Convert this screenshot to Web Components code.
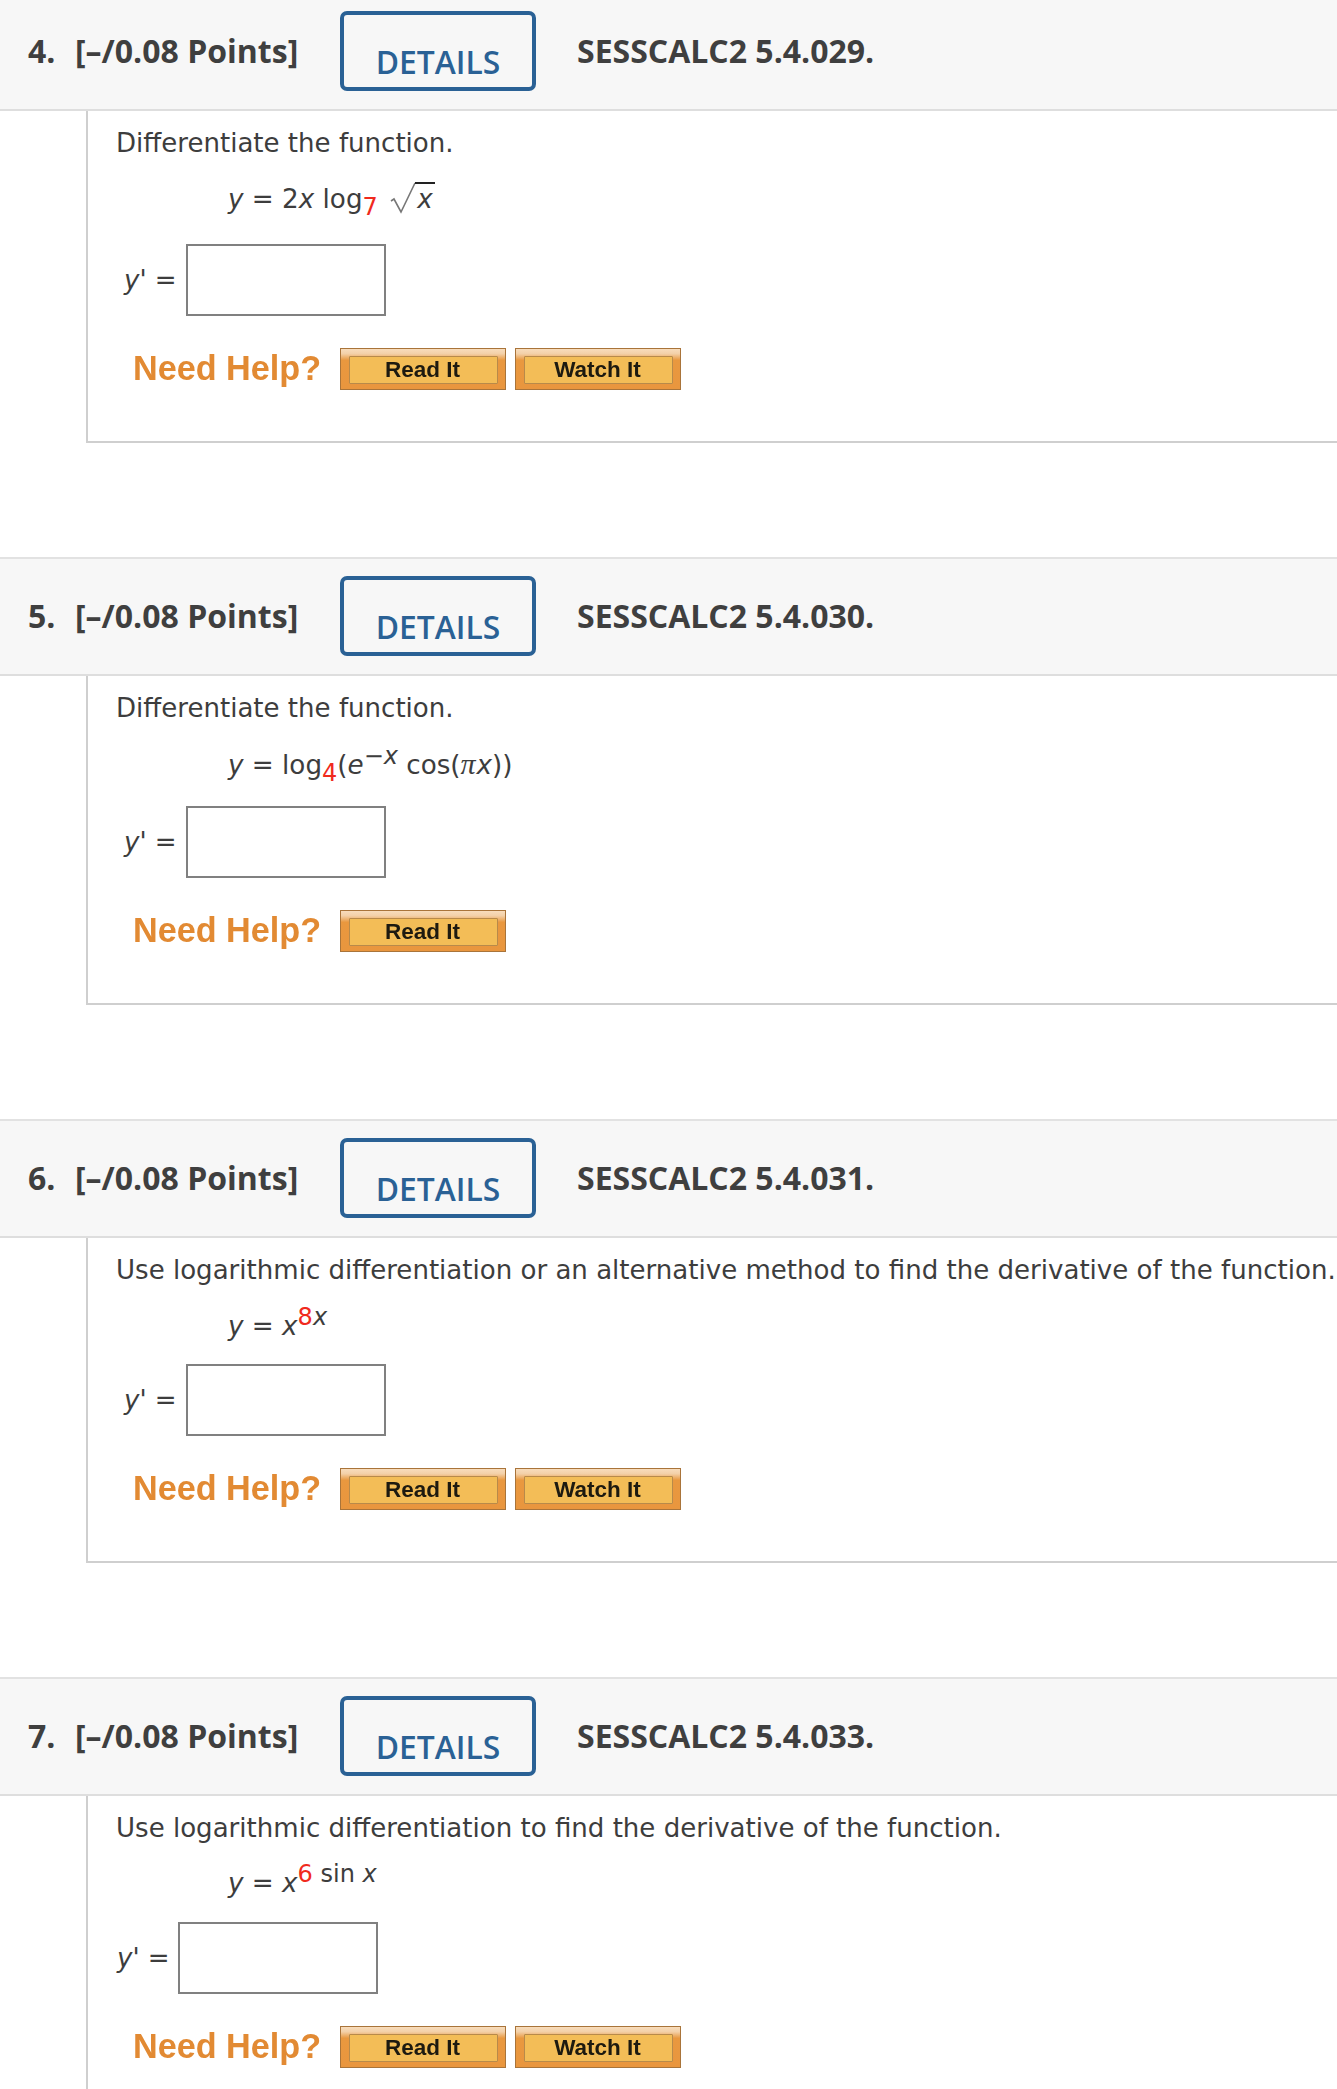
<!DOCTYPE html>
<html><head><meta charset="utf-8">
<style>
html{margin:0;padding:0;height:2089px;overflow:hidden;background:#fff}
body{margin:-8px 0 0;padding:0;font-family:"DejaVu Sans",sans-serif;color:#3d3d3d}
.r{color:#f02a1d}
i{font-style:italic}
</style></head><body>
<template id="t-q"><style>
:host{display:block;margin-bottom:114px}
header{height:115px;background:#f7f7f7;border-top:2px solid #e2e2e2;border-bottom:2px solid #dedede;display:flex;align-items:center;font-family:"Open Sans",sans-serif;font-weight:700;font-size:32px;color:#3f3f3f;white-space:nowrap}
.num{margin-left:28px;width:47px;margin-bottom:3px}
.pts{width:265px;margin-bottom:3px}
x-details{margin-right:41px;margin-top:-2px}
.code{margin-bottom:3px}
.body{margin-left:86px;border-left:2px solid #cfcfcf;border-bottom:2px solid #cfcfcf;padding:12px 0 0 28px;height:calc(var(--bh,332px) - 14px);font-size:26.05px;white-space:nowrap}
.prompt{height:40px;line-height:40px}
.formula{height:calc(var(--fh,134px) - 53px);padding-left:112px;line-height:1;display:flex;align-items:flex-start;padding-top:var(--ft,20px);box-sizing:border-box;font-size:26.2px}
.row{display:flex;align-items:center;padding-left:var(--ri,8px);height:72px}
.row .lab{width:var(--lw,62px);flex:none}
.help{margin-top:32px;display:flex;align-items:center;margin-left:18px;gap:9px}
</style>
<header><span class="num"><slot name="num"></slot></span><span class="pts">[–/0.08 Points]</span><x-details></x-details><span class="code"><slot name="code"></slot></span></header>
<div class="body">
<div class="prompt"><slot name="prompt"></slot></div>
<div class="formula"><slot name="formula"></slot></div>
<div class="row"><span class="lab"><i>y'</i> =</span><x-answer></x-answer></div>
<div class="help"><x-needhelp></x-needhelp><slot name="help"></slot></div>
</div></template>

<template id="t-details"><style>
:host{display:block;box-sizing:border-box;width:196px;height:80px;border:4px solid #2a6195;border-radius:7px;color:#2a6195;font:600 31.8px "Open Sans",sans-serif;text-align:center;padding-top:27px;line-height:40px}
</style>DETAILS</template>

<template id="t-answer"><style>
:host{display:block;box-sizing:border-box;width:200px;height:72px;border:2px solid #808080;background:#fff}
</style></template>

<template id="t-needhelp"><style>
:host{display:block;width:198px;margin-left:-1px;font:700 34.200px "Liberation Sans",sans-serif;color:#e28a33;line-height:42px;height:42px;filter:blur(.55px);white-space:nowrap;margin-top:-2px}
</style>Need Help?</template>

<template id="t-btn"><style>
:host{display:block;box-sizing:border-box;width:166px;height:42px;border:1.5px solid #a9743a;background:linear-gradient(#f8dcbc 0,#f3d0a8 12%,#e9983f 28%,#e9963e 100%);padding:7px 7px 5px 8px}
div{box-sizing:border-box;height:100%;background:#f3bd57;border:1.5px solid #b88a4a;border-radius:1px;display:flex;align-items:center;justify-content:center;font:700 22.5px "Liberation Sans",sans-serif;color:#1d1a10}
span{filter:blur(.45px);margin-left:-2px}
</style><div><span><slot></slot></span></div></template>

<x-question style="--fh:134px;--ft:18px;--bh:332px">
<span slot="num">4.</span><span slot="code">SESSCALC2 5.4.029.</span>
<span slot="prompt">Differentiate the function.</span>
<span slot="formula"><i>y</i> = 2<i>x</i> log<sub class="r" style="font-size:24px;line-height:0;vertical-align:-7px">7</sub> <svg width="27" height="32" viewBox="0 0 27 32" style="vertical-align:-5px;margin-left:4px;overflow:visible" aria-hidden="true"><path d="M1 20l3-2L11 31 25 2" fill="none" stroke="#777" stroke-width="1.600"/><path d="M25 2H45" stroke="#222" stroke-width="2"/></svg><i>x</i></span>
<x-btn slot="help">Read It</x-btn><x-btn slot="help">Watch It</x-btn>
</x-question>

<x-question style="--fh:131px;--ft:21px;--bh:329px">
<span slot="num">5.</span><span slot="code">SESSCALC2 5.4.030.</span>
<span slot="prompt">Differentiate the function.</span>
<span slot="formula"><i>y</i> = log<sub class="r" style="font-size:24px;line-height:0;vertical-align:-7px">4</sub>(<i>e</i><sup style="font-size:24px;line-height:0;vertical-align:10px">−<i>x</i></sup> cos(<i style="font-family:'Liberation Serif',serif;font-size:30px;margin-right:1px">π</i><i>x</i>))</span>
<x-btn slot="help">Read It</x-btn>
</x-question>

<x-question style="--fh:127px;--ft:23px;--bh:325px">
<span slot="num">6.</span><span slot="code">SESSCALC2 5.4.031.</span>
<span slot="prompt">Use logarithmic differentiation or an alternative method to find the derivative of the function.</span>
<span slot="formula"><i>y</i> = <i>x</i><sup style="font-size:24px;line-height:0;vertical-align:10px"><span class="r">8</span><i>x</i></sup></span>
<x-btn slot="help">Read It</x-btn><x-btn slot="help">Watch It</x-btn>
</x-question>

<x-question style="--fh:127px;--ft:22px;--bh:325px;--ri:1px;--lw:61px">
<span slot="num">7.</span><span slot="code">SESSCALC2 5.4.033.</span>
<span slot="prompt">Use logarithmic differentiation to find the derivative of the function.</span>
<span slot="formula"><i>y</i> = <i>x</i><sup style="font-size:24px;line-height:0;vertical-align:10px"><span class="r">6</span> sin <i>x</i></sup></span>
<x-btn slot="help">Read It</x-btn><x-btn slot="help">Watch It</x-btn>
</x-question>

<script>
function def(tag,tpl){customElements.define(tag,class extends HTMLElement{constructor(){super();this.attachShadow({mode:'open'}).appendChild(document.getElementById(tpl).content.cloneNode(true));}});}
def('x-details','t-details');def('x-answer','t-answer');def('x-needhelp','t-needhelp');def('x-btn','t-btn');def('x-question','t-q');
</script>
</body></html>
